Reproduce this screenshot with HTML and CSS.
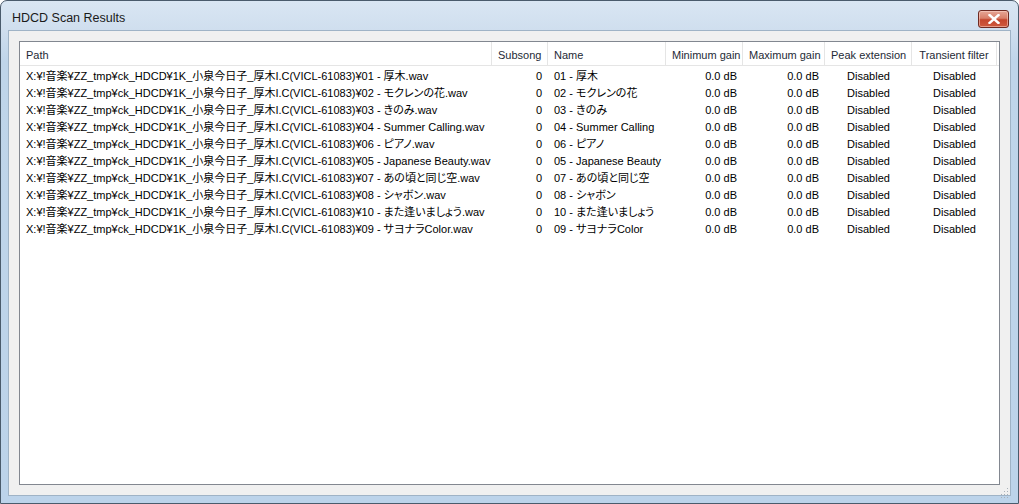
FILE: index.html
```html
<!DOCTYPE html>
<html lang="ja">
<head>
<meta charset="utf-8">
<title>HDCD Scan Results</title>
<link rel="stylesheet" href="styles.css">
</head>
<body>
<div class="window">
  <div class="titlebar">
    <span class="title">HDCD Scan Results</span>
    <button class="close" aria-label="Close">
      <svg width="12" height="10" viewBox="0 0 12 10"><path d="M1.5 1 L10.5 9 M10.5 1 L1.5 9" stroke="#fff" stroke-width="2.4" stroke-linecap="square" fill="none"/></svg>
    </button>
  </div>
  <div class="client">
    <div class="listview">
      <div class="grid">
        <div class="hcell">Path</div>
        <div class="hcell r">Subsong</div>
        <div class="hcell">Name</div>
        <div class="hcell r">Minimum gain</div>
        <div class="hcell r">Maximum gain</div>
        <div class="hcell c">Peak extension</div>
        <div class="hcell c">Transient filter</div>
        <div class="hcell fill"></div>
      </div>
      <div class="grid rows">
        <div class="cell">X:¥!音楽¥ZZ_tmp¥ck_HDCD¥1K_小泉今日子_厚木I.C(VICL-61083)¥01 - 厚木.wav</div><div class="cell r">0</div><div class="cell">01 - 厚木</div><div class="cell r">0.0 dB</div><div class="cell r">0.0 dB</div><div class="cell c">Disabled</div><div class="cell c">Disabled</div><div class="cell"></div>
        <div class="cell">X:¥!音楽¥ZZ_tmp¥ck_HDCD¥1K_小泉今日子_厚木I.C(VICL-61083)¥02 - モクレンの花.wav</div><div class="cell r">0</div><div class="cell">02 - モクレンの花</div><div class="cell r">0.0 dB</div><div class="cell r">0.0 dB</div><div class="cell c">Disabled</div><div class="cell c">Disabled</div><div class="cell"></div>
        <div class="cell">X:¥!音楽¥ZZ_tmp¥ck_HDCD¥1K_小泉今日子_厚木I.C(VICL-61083)¥03 - きのみ.wav</div><div class="cell r">0</div><div class="cell">03 - きのみ</div><div class="cell r">0.0 dB</div><div class="cell r">0.0 dB</div><div class="cell c">Disabled</div><div class="cell c">Disabled</div><div class="cell"></div>
        <div class="cell">X:¥!音楽¥ZZ_tmp¥ck_HDCD¥1K_小泉今日子_厚木I.C(VICL-61083)¥04 - Summer Calling.wav</div><div class="cell r">0</div><div class="cell">04 - Summer Calling</div><div class="cell r">0.0 dB</div><div class="cell r">0.0 dB</div><div class="cell c">Disabled</div><div class="cell c">Disabled</div><div class="cell"></div>
        <div class="cell">X:¥!音楽¥ZZ_tmp¥ck_HDCD¥1K_小泉今日子_厚木I.C(VICL-61083)¥06 - ピアノ.wav</div><div class="cell r">0</div><div class="cell">06 - ピアノ</div><div class="cell r">0.0 dB</div><div class="cell r">0.0 dB</div><div class="cell c">Disabled</div><div class="cell c">Disabled</div><div class="cell"></div>
        <div class="cell">X:¥!音楽¥ZZ_tmp¥ck_HDCD¥1K_小泉今日子_厚木I.C(VICL-61083)¥05 - Japanese Beauty.wav</div><div class="cell r">0</div><div class="cell">05 - Japanese Beauty</div><div class="cell r">0.0 dB</div><div class="cell r">0.0 dB</div><div class="cell c">Disabled</div><div class="cell c">Disabled</div><div class="cell"></div>
        <div class="cell">X:¥!音楽¥ZZ_tmp¥ck_HDCD¥1K_小泉今日子_厚木I.C(VICL-61083)¥07 - あの頃と同じ空.wav</div><div class="cell r">0</div><div class="cell">07 - あの頃と同じ空</div><div class="cell r">0.0 dB</div><div class="cell r">0.0 dB</div><div class="cell c">Disabled</div><div class="cell c">Disabled</div><div class="cell"></div>
        <div class="cell">X:¥!音楽¥ZZ_tmp¥ck_HDCD¥1K_小泉今日子_厚木I.C(VICL-61083)¥08 - シャボン.wav</div><div class="cell r">0</div><div class="cell">08 - シャボン</div><div class="cell r">0.0 dB</div><div class="cell r">0.0 dB</div><div class="cell c">Disabled</div><div class="cell c">Disabled</div><div class="cell"></div>
        <div class="cell">X:¥!音楽¥ZZ_tmp¥ck_HDCD¥1K_小泉今日子_厚木I.C(VICL-61083)¥10 - また逢いましょう.wav</div><div class="cell r">0</div><div class="cell">10 - また逢いましょう</div><div class="cell r">0.0 dB</div><div class="cell r">0.0 dB</div><div class="cell c">Disabled</div><div class="cell c">Disabled</div><div class="cell"></div>
        <div class="cell">X:¥!音楽¥ZZ_tmp¥ck_HDCD¥1K_小泉今日子_厚木I.C(VICL-61083)¥09 - サヨナラColor.wav</div><div class="cell r">0</div><div class="cell">09 - サヨナラColor</div><div class="cell r">0.0 dB</div><div class="cell r">0.0 dB</div><div class="cell c">Disabled</div><div class="cell c">Disabled</div><div class="cell"></div>
      </div>
    </div>
    <div class="grip">
      <svg width="10" height="10" viewBox="0 0 10 10" fill="#a8b0b8"><rect x="8" y="0" width="1" height="1"/><rect x="8" y="3" width="1" height="1"/><rect x="5" y="3" width="1" height="1"/><rect x="8" y="6" width="1" height="1"/><rect x="5" y="6" width="1" height="1"/><rect x="2" y="6" width="1" height="1"/><rect x="8" y="9" width="1" height="1"/><rect x="5" y="9" width="1" height="1"/><rect x="2" y="9" width="1" height="1"/></svg>
    </div>
  </div>
</div>
</body>
</html>
```
FILE: styles.css
```css
html, body {
  margin: 0;
  padding: 0;
  width: 1019px;
  height: 504px;
  overflow: hidden;
  background: #ffffff;
}

.window {
  box-sizing: border-box;
  width: 1019px;
  height: 504px;
  display: flex;
  flex-direction: column;
  border: 1px solid #4a5b6c;
  border-radius: 7px 7px 0 0;
  background: linear-gradient(#d9e6f3 0px, #cfdeee 30px, #bfd5ea 60px, #bcd3ea 100%);
  font-family: "Liberation Sans", "Noto Sans CJK JP", sans-serif;
}

.titlebar {
  height: 29px;
  display: flex;
  align-items: flex-start;
  justify-content: space-between;
  padding: 9px 9px 0 11px;
  box-sizing: border-box;
}

.title {
  font-family: "Liberation Sans", sans-serif;
  font-size: 12.5px;
  line-height: 16px;
  color: #1a1a1a;
}

.close {
  width: 31px;
  height: 18px;
  padding: 0;
  display: flex;
  align-items: center;
  justify-content: center;
  border: 1px solid #6e2a22;
  border-radius: 3px;
  background: linear-gradient(#e6a696 0%, #d9806a 45%, #c4452d 55%, #cf5a3e 100%);
  box-shadow: inset 0 0 0 1px rgba(255, 220, 210, 0.5);
}

.client {
  flex: 1;
  margin: 0 7px 7px 7px;
  background: #f0f0f0;
  border: 1px solid #9fb3c6;
  position: relative;
  display: flex;
  padding: 10px 10px 10px 10px;
}

.listview {
  flex: 1;
  background: #ffffff;
  border: 1px solid #828790;
  overflow: hidden;
}

.grid {
  display: grid;
  grid-template-columns: 472px 56px 118px 77px 82px 87px 85px 1fr;
  font-size: 11px;
  color: #000;
  font-feature-settings: "palt" 1;
}

.hcell {
  height: 19px;
  line-height: 19px;
  padding: 4px 6px 0 6px;
  border-right: 1px solid #e5e5e5;
  border-bottom: 1px solid #e5e5e5;
  color: #1e2a36;
  white-space: nowrap;
  overflow: hidden;
}

.hcell.fill {
  border-right: none;
}

.rows {
  padding-top: 2px;
}

.cell {
  height: 17px;
  line-height: 17px;
  padding: 0 6px;
  white-space: nowrap;
  overflow: hidden;
}

.r { text-align: right; }
.c { text-align: center; }

.grip {
  position: absolute;
  right: 1px;
  bottom: 1px;
  width: 10px;
  height: 10px;
}
```
